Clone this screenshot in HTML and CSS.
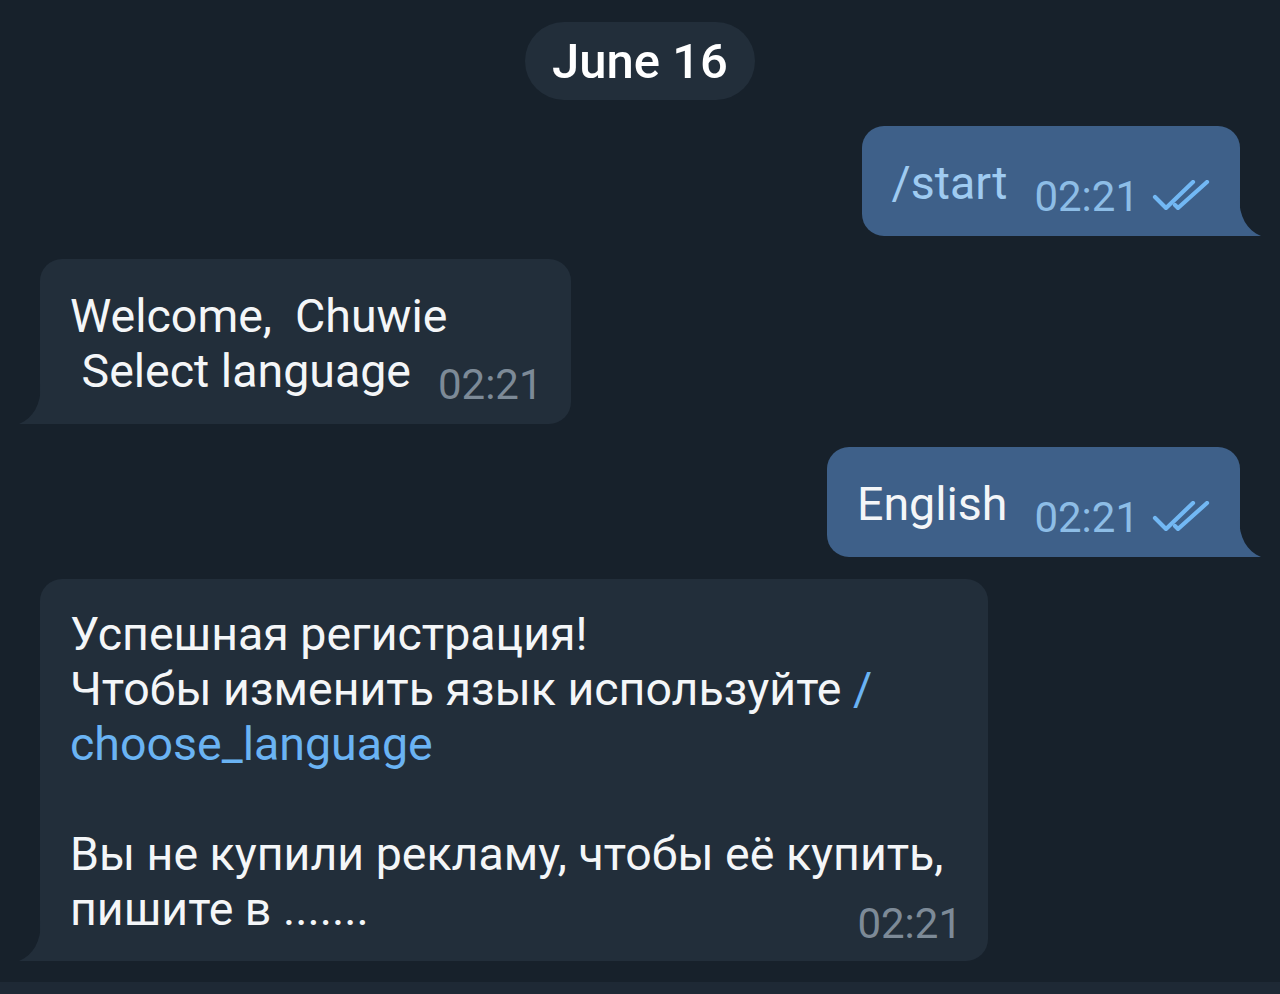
FILE: index.html
```html
<!DOCTYPE html>
<html lang="ru">
<head>
<meta charset="utf-8">
<title>Chat</title>
<link rel="stylesheet" href="styles.css">
</head>
<body>
<div class="app">
  <main class="chat">
    <div class="date"><span class="date__pill">June 16</span></div>

    <div class="msg msg--out">
      <div class="bubble bubble--out">
        <div class="bubble__text bubble__text--cmd">/start<span class="meta meta--out"><span class="meta__time">02:21</span><svg class="meta__check" viewBox="0 0 60 30" width="60" height="30"><path d="M3 17 L14 28 L41 2"/><path d="M23 25 L26 28 L55 2"/></svg></span></div>
        <svg class="tail tail--out" viewBox="0 0 22 40" width="22" height="40"><path d="M0 0 C0 21 8 34 22 40 L0 40 Z"/></svg>
      </div>
    </div>

    <div class="msg msg--in">
      <div class="bubble bubble--in">
        <div class="bubble__text">Welcome,  Chuwie
 Select language<span class="meta meta--in"><span class="meta__time">02:21</span></span></div>
        <svg class="tail tail--in" viewBox="0 0 22 40" width="22" height="40"><path d="M0 0 C0 21 8 34 22 40 L0 40 Z"/></svg>
      </div>
    </div>

    <div class="msg msg--out">
      <div class="bubble bubble--out">
        <div class="bubble__text">English<span class="meta meta--out"><span class="meta__time">02:21</span><svg class="meta__check" viewBox="0 0 60 30" width="60" height="30"><path d="M3 17 L14 28 L41 2"/><path d="M23 25 L26 28 L55 2"/></svg></span></div>
        <svg class="tail tail--out" viewBox="0 0 22 40" width="22" height="40"><path d="M0 0 C0 21 8 34 22 40 L0 40 Z"/></svg>
      </div>
    </div>

    <div class="msg msg--in msg--last">
      <div class="bubble bubble--in bubble--stacked">
        <div class="bubble__text">Успешная регистрация!<br>Чтобы изменить язык используйте <span class="link">/</span><br><span class="link">choose_language</span><br><br>Вы не купили рекламу, чтобы её купить,<br>пишите в .......</div>
        <div class="meta meta--in meta--corner"><span class="meta__time">02:21</span></div>
        <svg class="tail tail--in" viewBox="0 0 22 40" width="22" height="40"><path d="M0 0 C0 21 8 34 22 40 L0 40 Z"/></svg>
      </div>
    </div>
  </main>
  <div class="composer"></div>
</div>
</body>
</html>
```

FILE: styles.css
```css
* { box-sizing: border-box; }

html, body {
  margin: 0;
  padding: 0;
  background: #17212b;
}

body {
  font-family: Roboto, "Noto Sans", "Liberation Sans", sans-serif;
  color: #f4f6f8;
}

.app {
  height: 100vh;
  display: flex;
  flex-direction: column;
}

.chat {
  flex: 1;
  display: flex;
  flex-direction: column;
  gap: 23px;
  padding: 22px 40px 0;
}

.date {
  display: flex;
  justify-content: center;
  margin-bottom: 3px;
}

.date__pill {
  background: #222e3a;
  color: #ffffff;
  font-size: 49px;
  font-weight: 500;
  line-height: 56px;
  padding: 12px 27px 10px;
  border-radius: 40px;
}

.msg {
  display: flex;
}

.msg--out { justify-content: flex-end; }
.msg--in { justify-content: flex-start; }
.msg--last { margin-top: -1px; }

.bubble {
  position: relative;
  padding: 30px 28px 19px 30px;
  border-radius: 22px;
}

.bubble--out {
  background: #3e6089;
  color: #3e6089;
  border-bottom-right-radius: 0;
}

.bubble--in {
  background: #222e3a;
  color: #222e3a;
  border-bottom-left-radius: 0;
}

.bubble--stacked {
  display: grid;
  width: 948px;
  padding-top: 28px;
  padding-right: 26px;
  padding-bottom: 17px;
}

.bubble--stacked > .bubble__text,
.bubble--stacked > .meta {
  grid-area: 1 / 1;
}

.bubble--stacked > .bubble__text {
  margin-bottom: 7px;
}

.bubble__text {
  font-size: 46.5px;
  line-height: 55px;
  color: #f4f6f8;
  white-space: pre-wrap;
}

.bubble__text--cmd {
  color: #9fcbf1;
}

.link {
  color: #6ab3f3;
}

.meta {
  display: inline-flex;
  align-items: flex-end;
  gap: 13px;
  margin-left: 27px;
  vertical-align: -12px;
  font-size: 42px;
  line-height: 40px;
  white-space: nowrap;
}

.meta--corner {
  display: flex;
  margin-left: 0;
  justify-self: end;
  align-self: end;
}

.meta--in .meta__time { color: #7d8a97; }
.meta--out .meta__time { color: #8dbde6; }

.meta__check {
  margin-bottom: 7px;
  fill: none;
  stroke: #72b8f4;
  stroke-width: 4.2;
  stroke-linecap: round;
  stroke-linejoin: round;
}

.tail {
  position: absolute;
  bottom: 0;
  fill: currentColor;
}

.tail--out { right: -21px; }
.tail--in { left: -21px; transform: scaleX(-1); }

.composer {
  height: 12px;
  background: #1e2935;
}
```
